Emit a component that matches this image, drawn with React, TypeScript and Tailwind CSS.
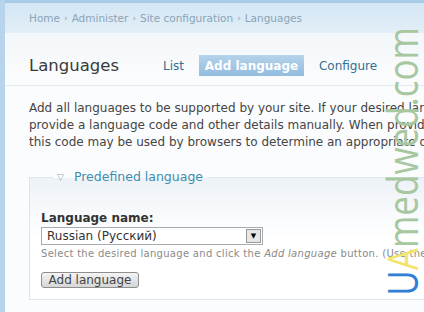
export default function App() {
  return (
    <div className="relative flex h-[312px] w-[424px] overflow-hidden bg-[#fbfcfd] font-['DejaVu_Sans',Verdana,sans-serif]">
      <div className="w-[5px] shrink-0 bg-[#b7d4ec]" />
      <div className="flex min-w-0 flex-1 flex-col">
        <div className="h-[3px] shrink-0 bg-[#a8cbe8]" />
        <div className="flex h-[30px] shrink-0 items-center bg-gradient-to-b from-[#d4e6f4] to-[#e3eef7] pl-[24px] pt-[1px] text-[10.5px] text-[#8ba4b7] whitespace-nowrap">
          Home <span className="mx-[4px] text-[9px]">›</span> Administer <span className="mx-[4px] text-[9px]">›</span> Site configuration <span className="mx-[4px] text-[9px]">›</span> Languages
        </div>
        <div className="flex h-[53px] shrink-0 items-end border-b border-[#e4eaef] bg-gradient-to-b from-[#f3f7fa] to-[#fbfcfd] pb-[9px] pl-[24px] whitespace-nowrap">
          <h1 className="w-[134px] text-[16.5px] leading-[21px] text-[#3a3a3a]">Languages</h1>
          <div className="flex items-center text-[12px] text-[#34708f]">
            <span>List</span>
            <span className="ml-[15px] flex h-[21px] w-[105px] items-center justify-center bg-gradient-to-b from-[#b5d3ea] to-[#93bcde] font-bold text-white">
              Add language
            </span>
            <span className="ml-[15px]">Configure</span>
          </div>
        </div>
        <div className="pl-[24px] pt-[14px]">
          <p className="whitespace-nowrap text-[12px] leading-[17px] text-[#454545]">
            Add all languages to be supported by your site. If your desired language is not available,
            <br />
            provide a language code and other details manually. When providing a language code manually,
            <br />
            this code may be used by browsers to determine an appropriate display language.
          </p>
          <fieldset className="mt-[17px] mr-[-40px] h-[132px] border border-[#dfe5ea] bg-gradient-to-b from-[#edf2f7] via-white to-white px-[11px]">
            <legend className="ml-[12px] flex items-center px-[4px] text-[12.5px] text-[#3d8db0]">
              <span className="mr-[10px] text-[9px] text-[#9aa8b2]">▽</span>
              Predefined language
            </legend>
            <div className="pt-[22px] text-[12px] font-bold text-[#333]">Language name:</div>
            <div className="flex h-[18px] w-[222px] items-center border border-[#a5acb2] bg-white pl-[5px] pr-[1px] text-[12px] text-[#333]">
              <span className="flex-1 whitespace-nowrap">Russian (Русский)</span>
              <span className="flex h-[14px] w-[15px] items-center justify-center border border-[#9a9a9a] bg-[#e6e6e6] text-[7px] text-black">▼</span>
            </div>
            <div className="mt-[1px] whitespace-nowrap text-[10px] tracking-[0.3px] text-[#8a8a8a]">
              Select the desired language and click the <i>Add language</i> button. (Use the Custom language section below.)
            </div>
            <button className="mt-[11px] flex h-[16px] w-[98px] items-center justify-center rounded-[3px] border border-[#8e8e8e] bg-gradient-to-b from-[#f4f4f4] to-[#d6d6d6] text-[12px] text-[#444]">
              Add language
            </button>
          </fieldset>
        </div>
      </div>
      <div className="absolute bottom-[16px] left-[385px] rotate-180 scale-x-[1.18] whitespace-nowrap font-['Open_Sans',sans-serif] text-[35px] leading-[36px] [writing-mode:vertical-rl]">
        <span className="text-[#2f7fd4]">U</span>
        <span className="text-[#f3e56c]">A</span>
        <span className="text-[#a7c79f]">medwed.com</span>
      </div>
    </div>
  );
}
